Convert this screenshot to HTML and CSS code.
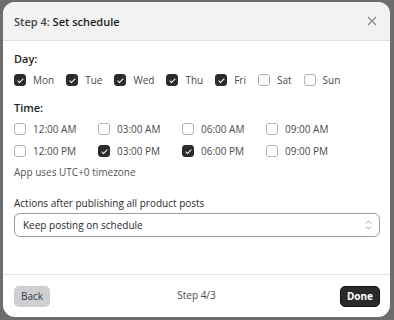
FILE: index.html
```html
<!DOCTYPE html>
<html>
<head>
<meta charset="utf-8">
<link rel="stylesheet" href="styles.css">
</head>
<body>
<div class="dialog">
  <div class="header">
    <div class="title"><span class="step">Step 4:</span> Set schedule</div>
    <svg class="close" width="10" height="10" viewBox="0 0 10 10"><path d="M1 1L9 9M9 1L1 9" stroke="#8a8a8a" stroke-width="1.2"/></svg>
  </div>
  <div class="body">
    <div class="label">Day:</div>
    <div class="days">
      <label class="cb on"><span class="box"></span>Mon</label>
      <label class="cb on"><span class="box"></span>Tue</label>
      <label class="cb on"><span class="box"></span>Wed</label>
      <label class="cb on"><span class="box"></span>Thu</label>
      <label class="cb on"><span class="box"></span>Fri</label>
      <label class="cb"><span class="box"></span>Sat</label>
      <label class="cb"><span class="box"></span>Sun</label>
    </div>
    <div class="label time-label">Time:</div>
    <div class="times">
      <label class="cb"><span class="box"></span>12:00 AM</label>
      <label class="cb"><span class="box"></span>03:00 AM</label>
      <label class="cb"><span class="box"></span>06:00 AM</label>
      <label class="cb"><span class="box"></span>09:00 AM</label>
      <label class="cb"><span class="box"></span>12:00 PM</label>
      <label class="cb on"><span class="box"></span>03:00 PM</label>
      <label class="cb on"><span class="box"></span>06:00 PM</label>
      <label class="cb"><span class="box"></span>09:00 PM</label>
    </div>
    <div class="note">App uses UTC+0 timezone</div>
    <div class="field-label">Actions after publishing all product posts</div>
    <div class="select">
      <span>Keep posting on schedule</span>
      <svg width="7" height="10" viewBox="0 0 7 10"><path d="M1 3.5L3.5 1L6 3.5M1 6.5L3.5 9L6 6.5" fill="none" stroke="#8a8a8a" stroke-width="0.9"/></svg>
    </div>
  </div>
  <div class="footer">
    <button class="btn back">Back</button>
    <span class="counter">Step 4/3</span>
    <button class="btn done">Done</button>
  </div>
</div>
</body>
</html>
```
FILE: styles.css
```css
html, body {
  margin: 0;
  padding: 0;
  background: #6d6d6d;
  width: 394px;
  height: 320px;
  overflow: hidden;
}
body {
  font-family: "Open Sans", "Noto Sans", sans-serif;
  font-size: 10px;
  color: #303030;
}
.dialog {
  margin: 2px 0 0 3px;
  width: 387px;
  height: 315px;
  background: #fff;
  border-radius: 12px;
  overflow: hidden;
  display: flex;
  flex-direction: column;
}
.header {
  height: 38px;
  flex: none;
  background: #f2f2f2;
  border-bottom: 1px solid #dedede;
  display: flex;
  align-items: center;
  justify-content: space-between;
  padding: 0 13px 0 11px;
}
.title {
  font-size: 11px;
  font-weight: 600;
  color: #1c1c1c;
}
.title .step {
  color: #444;
}
.body {
  flex: 1;
  padding: 11px 10px 0 11px;
}
.label {
  font-size: 11px;
  font-weight: 600;
  color: #1e1e1e;
  line-height: 14px;
}
.days {
  display: flex;
  margin-top: 7px;
}
.cb {
  display: flex;
  align-items: center;
  color: #4a4a4a;
  line-height: 14px;
  white-space: nowrap;
}
.days .cb { margin-right: 12px; }
.box {
  width: 12px;
  height: 12px;
  border: 1px solid #b0b0b0;
  border-radius: 3px;
  margin-right: 7px;
  box-sizing: border-box;
  position: relative;
  background: #fff;
}
.cb.on .box {
  background: #2c2c2c;
  border-color: #2c2c2c;
}
.cb.on .box::after {
  content: "";
  position: absolute;
  left: 3.5px;
  top: 1.5px;
  width: 2px;
  height: 5px;
  border: solid #fff;
  border-width: 0 1.2px 1.2px 0;
  transform: rotate(45deg);
}
.time-label {
  margin-top: 14px;
}
.times {
  display: grid;
  grid-template-columns: repeat(4, 84px);
  row-gap: 8px;
  margin-top: 7px;
}
.note {
  margin-top: 7px;
  color: #555;
}
.field-label {
  margin-top: 17px;
  color: #2a2a2a;
}
.select {
  margin-top: 3px;
  height: 22px;
  border: 1px solid #9a9a9a;
  border-radius: 6px;
  display: flex;
  align-items: center;
  justify-content: space-between;
  padding: 0 7px 0 8px;
  color: #2a2a2a;
}
.footer {
  height: 42px;
  flex: none;
  border-top: 1px solid #e4e4e4;
  display: flex;
  align-items: center;
  justify-content: space-between;
  padding: 0 10px 0 11px;
  position: relative;
}
.btn {
  font-family: inherit;
  font-size: 10px;
  border: none;
  border-radius: 5px;
  height: 21px;
  padding: 0 7px;
}
.back {
  background: #cfcfcf;
  color: #2a3a55;
}
.done {
  background: #2a2a2a;
  color: #fff;
  font-weight: 700;
  border: 1px solid #111;
  padding: 0 6px;
}
.counter {
  position: absolute;
  left: 0;
  right: 0;
  text-align: center;
  color: #4a4a4a;
  pointer-events: none;
  top: 13px;
}
```
